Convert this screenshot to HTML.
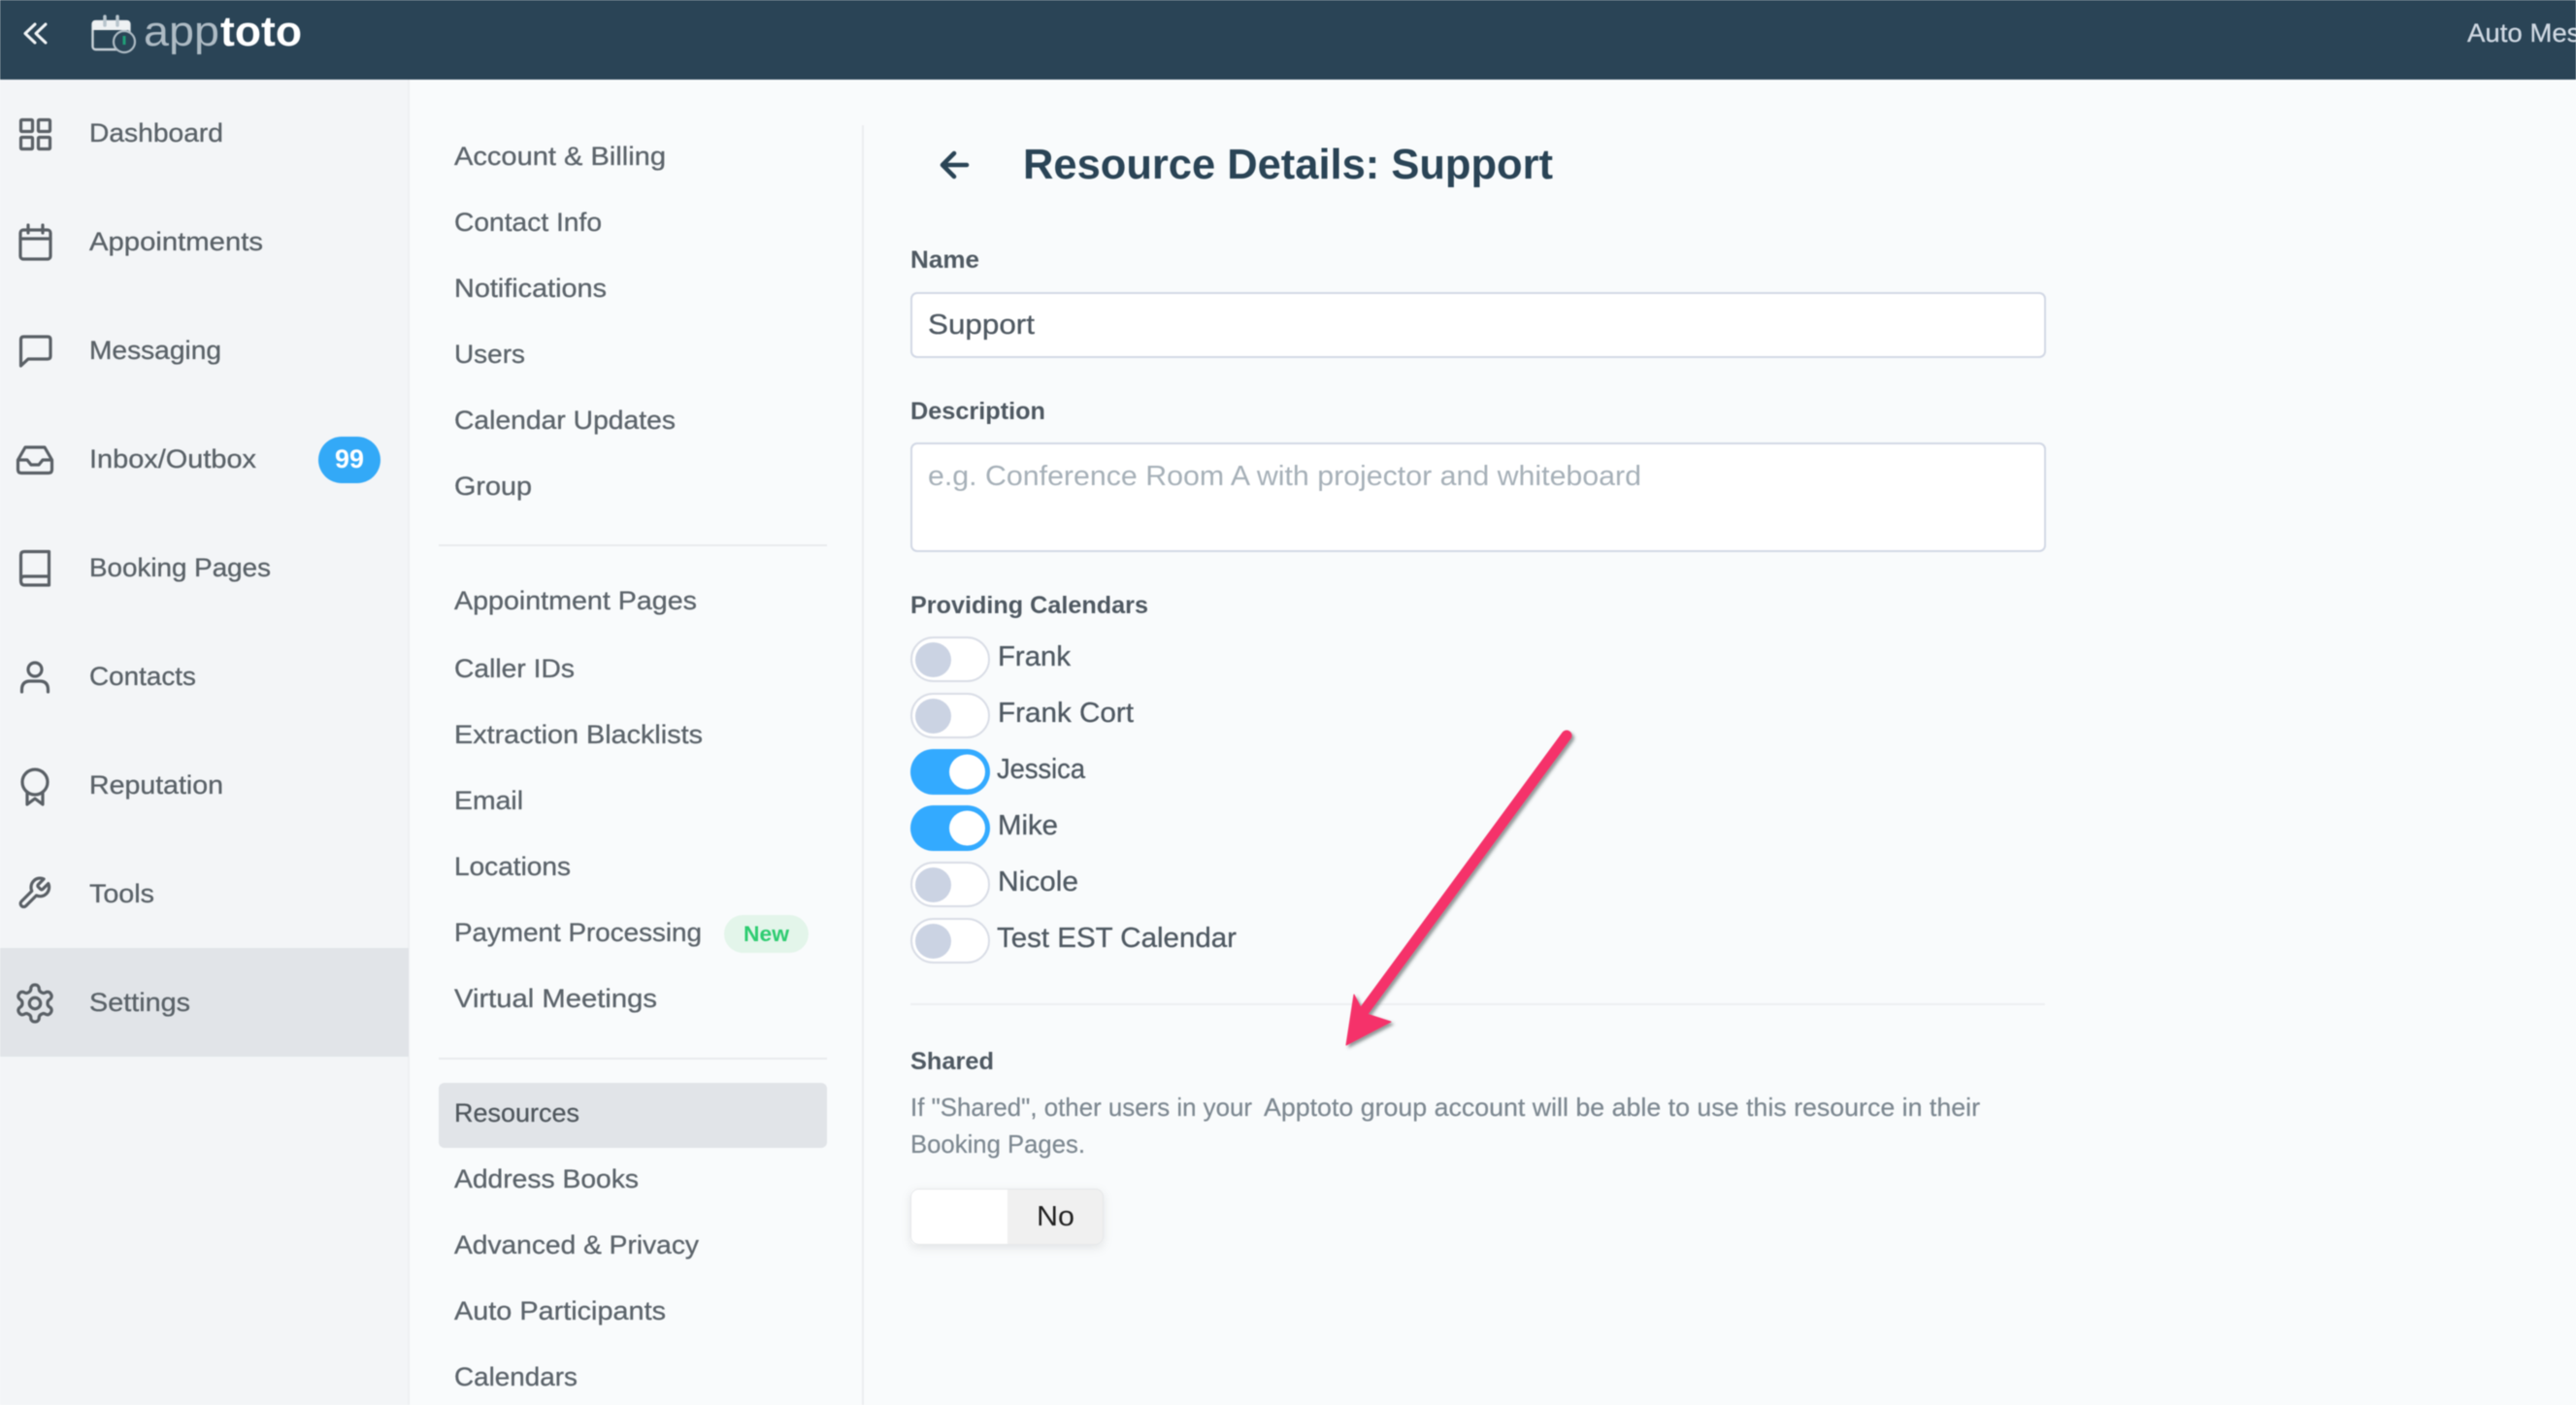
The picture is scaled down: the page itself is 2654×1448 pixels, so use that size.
<!DOCTYPE html>
<html lang="en">
<head>
<meta charset="utf-8">
<title>Resource Details: Support</title>
<style>
html,body{margin:0;padding:0;width:2654px;height:1448px;overflow:hidden;background:#f9fbfc}
svg{display:block;filter:blur(.55px)}
text{font-family:"Liberation Sans",sans-serif;white-space:pre}
.n{font-size:27px;fill:#5a6268;stroke:#5a6268;stroke-width:.3px}
.m{font-size:27px;fill:#5c646b;stroke:#5c646b;stroke-width:.3px}
.l{font-size:25px;font-weight:700;fill:#4f5962}
.t{font-size:29px;fill:#4f5962;stroke:#4f5962;stroke-width:.3px}
.h{font-size:26px;fill:#7d8891;stroke:#7d8891;stroke-width:.2px}
.i{fill:none;stroke:#5a6066;stroke-width:3.2;stroke-linecap:round;stroke-linejoin:round}
</style>
</head>
<body>
<svg xmlns="http://www.w3.org/2000/svg" width="2654" height="1448" viewBox="0 0 2654 1448">
<defs>
<filter id="as" x="-20%" y="-20%" width="140%" height="140%"><feDropShadow dx="2.5" dy="2.5" stdDeviation="1.6" flood-color="#3a4a48" flood-opacity=".55"/></filter>
<filter id="ts" x="-20%" y="-30%" width="140%" height="170%"><feDropShadow dx="0" dy="3" stdDeviation="5" flood-color="#000" flood-opacity=".09"/></filter>
</defs>

<!-- backgrounds -->
<rect width="2654" height="1448" fill="#f9fbfc"/>
<rect x="0" y="82" width="420" height="1366" fill="#f3f5f7"/>
<rect x="420" y="82" width="2" height="1366" fill="#eef0f2"/>
<rect x="0" y="977" width="421" height="112" fill="#e1e4e8"/>
<rect width="2654" height="82" fill="#2a4456"/>
<rect x="888" y="129" width="2" height="1319" fill="#ecedef"/>

<!-- header -->
<path d="M36 25 L26 34.5 L36 44 M47 25 L37 34.5 L47 44" fill="none" stroke="#f2f5f7" stroke-width="3" stroke-linecap="round" stroke-linejoin="round"/>
<rect x="95.5" y="22" width="38" height="29" rx="3" fill="none" stroke="#c9d2d8" stroke-width="2.4"/>
<path d="M95 31 V24 Q95 21 98 21 H131 Q134 21 134 24 V31 Z" fill="#eef1f3"/>
<path d="M108 17 V26 M121 17 V26" stroke="#b8c4cc" stroke-width="3.5" stroke-linecap="round"/>
<circle cx="128" cy="43" r="11" fill="#2a4456" stroke="#aebbc4" stroke-width="2.2"/>
<path d="M128 37 V46" stroke="#1f9e78" stroke-width="3"/>
<text x="148" y="47" font-size="44" fill="#aebbc4" textLength="78" lengthAdjust="spacingAndGlyphs">app</text>
<text x="227" y="47" font-size="44" font-weight="700" fill="#fff" textLength="84" lengthAdjust="spacingAndGlyphs">toto</text>
<text x="2542" y="43" font-size="27" fill="#cfd8e2" stroke="#cfd8e2" stroke-width=".3" textLength="190" lengthAdjust="spacingAndGlyphs">Auto Messages</text>

<!-- sidebar icons -->
<g class="i">
<rect x="21.5" y="123.5" width="12" height="12" rx="1"/><rect x="39.5" y="123.5" width="12" height="12" rx="1"/><rect x="21.5" y="141.5" width="12" height="12" rx="1"/><rect x="39.5" y="141.5" width="12" height="12" rx="1"/>
<rect x="21" y="237" width="31" height="30" rx="3"/><path d="M21 246 H52 M29 232 V240 M44 232 V240"/>
<path d="M21.5 377 V350 Q21.5 347 24.5 347 H49 Q52 347 52 350 V367 Q52 370 49 370 H29 Z"/>
<path d="M18.5 474 L26 461 H46 L53.5 474 V484 Q53.5 487.5 50 487.5 H22 Q18.5 487.5 18.5 484 Z"/><path d="M19 474 H28 L32 479 H40 L44 474 H53"/>
<path d="M21.5 598 V572 Q21.5 568.5 25 568.5 H50.5 V603 H25 Q21.5 603 21.5 598 Q21.5 594 25 594 H50.5"/>
<circle cx="36" cy="690" r="7"/><path d="M22.5 713 V711 Q22.5 702 31 702 H41 Q49.5 702 49.5 711 V713"/>
<circle cx="36" cy="806" r="13"/><path d="M28 817 V829 L36 823 L44 829 V817"/>
<g transform="translate(16.5 902) scale(1.55)" stroke-width="2.05"><path d="M14.7 6.3a1 1 0 0 0 0 1.4l1.6 1.6a1 1 0 0 0 1.4 0l3.77-3.77a6 6 0 0 1-7.94 7.94l-6.91 6.91a2.12 2.12 0 0 1-3-3l6.91-6.91a6 6 0 0 1 7.94-7.94l-3.76 3.76z"/></g>
<g transform="translate(13.2 1011.2) scale(1.9)" stroke-width="1.7"><path d="M12.22 2h-.44a2 2 0 0 0-2 2v.18a2 2 0 0 1-1 1.73l-.43.25a2 2 0 0 1-2 0l-.15-.08a2 2 0 0 0-2.73.73l-.22.38a2 2 0 0 0 .73 2.73l.15.1a2 2 0 0 1 1 1.72v.51a2 2 0 0 1-1 1.74l-.15.09a2 2 0 0 0-.73 2.73l.22.38a2 2 0 0 0 2.73.73l.15-.08a2 2 0 0 1 2 0l.43.25a2 2 0 0 1 1 1.73V20a2 2 0 0 0 2 2h.44a2 2 0 0 0 2-2v-.18a2 2 0 0 1 1-1.73l.43-.25a2 2 0 0 1 2 0l.15.08a2 2 0 0 0 2.73-.73l.22-.39a2 2 0 0 0-.73-2.73l-.15-.08a2 2 0 0 1-1-1.74v-.5a2 2 0 0 1 1-1.74l.15-.09a2 2 0 0 0 .73-2.73l-.22-.38a2 2 0 0 0-2.73-.73l-.15.08a2 2 0 0 1-2 0l-.43-.25a2 2 0 0 1-1-1.73V4a2 2 0 0 0-2-2z"/><circle cx="12" cy="12" r="3"/></g>
</g>

<!-- sidebar labels -->
<g class="n">
<text x="92" y="146" textLength="138" lengthAdjust="spacingAndGlyphs">Dashboard</text>
<text x="92" y="258" textLength="179" lengthAdjust="spacingAndGlyphs">Appointments</text>
<text x="92" y="370" textLength="136" lengthAdjust="spacingAndGlyphs">Messaging</text>
<text x="92" y="482" textLength="172" lengthAdjust="spacingAndGlyphs">Inbox/Outbox</text>
<text x="92" y="594" textLength="187" lengthAdjust="spacingAndGlyphs">Booking Pages</text>
<text x="92" y="706" textLength="110" lengthAdjust="spacingAndGlyphs">Contacts</text>
<text x="92" y="818" textLength="138" lengthAdjust="spacingAndGlyphs">Reputation</text>
<text x="92" y="930" textLength="67" lengthAdjust="spacingAndGlyphs">Tools</text>
<text x="92" y="1042" textLength="104" lengthAdjust="spacingAndGlyphs">Settings</text>
</g>
<rect x="328" y="450" width="64" height="48" rx="24" fill="#33a9f7"/>
<text x="345" y="482" font-size="27" font-weight="700" fill="#fff" textLength="30" lengthAdjust="spacingAndGlyphs">99</text>

<!-- settings nav -->
<rect x="452" y="561" width="400" height="2" fill="#e9ebed"/>
<rect x="452" y="1090" width="400" height="2" fill="#e9ebed"/>
<rect x="452" y="1116" width="400" height="67" rx="6" fill="#e1e4e8"/>
<rect x="746" y="943" width="87" height="39" rx="19.5" fill="#e3f5ea"/>
<text x="766" y="970" font-size="22" font-weight="700" fill="#2ecc71" textLength="47" lengthAdjust="spacingAndGlyphs">New</text>
<g class="m">
<text x="468" y="170" textLength="218" lengthAdjust="spacingAndGlyphs">Account &amp; Billing</text>
<text x="468" y="238" textLength="152" lengthAdjust="spacingAndGlyphs">Contact Info</text>
<text x="468" y="306" textLength="157" lengthAdjust="spacingAndGlyphs">Notifications</text>
<text x="468" y="374" textLength="73" lengthAdjust="spacingAndGlyphs">Users</text>
<text x="468" y="442" textLength="228" lengthAdjust="spacingAndGlyphs">Calendar Updates</text>
<text x="468" y="510" textLength="80" lengthAdjust="spacingAndGlyphs">Group</text>
<text x="468" y="628" textLength="250" lengthAdjust="spacingAndGlyphs">Appointment Pages</text>
<text x="468" y="698" textLength="124" lengthAdjust="spacingAndGlyphs">Caller IDs</text>
<text x="468" y="766" textLength="256" lengthAdjust="spacingAndGlyphs">Extraction Blacklists</text>
<text x="468" y="834" textLength="71" lengthAdjust="spacingAndGlyphs">Email</text>
<text x="468" y="902" textLength="120" lengthAdjust="spacingAndGlyphs">Locations</text>
<text x="468" y="970" textLength="255" lengthAdjust="spacingAndGlyphs">Payment Processing</text>
<text x="468" y="1038" textLength="209" lengthAdjust="spacingAndGlyphs">Virtual Meetings</text>
<text x="468" y="1156" textLength="129" lengthAdjust="spacingAndGlyphs" fill="#4f565c">Resources</text>
<text x="468" y="1224" textLength="190" lengthAdjust="spacingAndGlyphs">Address Books</text>
<text x="468" y="1292" textLength="252" lengthAdjust="spacingAndGlyphs">Advanced &amp; Privacy</text>
<text x="468" y="1360" textLength="218" lengthAdjust="spacingAndGlyphs">Auto Participants</text>
<text x="468" y="1428" textLength="127" lengthAdjust="spacingAndGlyphs">Calendars</text>
</g>

<!-- title -->
<path d="M996 170 H972 M983 158 L971 170 L983 182" fill="none" stroke="#2a4456" stroke-width="4.6" stroke-linecap="round" stroke-linejoin="round"/>
<text x="1054" y="184" font-size="44" font-weight="700" fill="#2a4456" textLength="546" lengthAdjust="spacingAndGlyphs">Resource Details: Support</text>

<!-- form -->
<text class="l" x="938" y="276" textLength="71" lengthAdjust="spacingAndGlyphs">Name</text>
<rect x="939" y="302" width="1168" height="66" rx="6" fill="#fff" stroke="#d2d8e5" stroke-width="2"/>
<text class="t" x="956" y="344" textLength="110" lengthAdjust="spacingAndGlyphs">Support</text>

<text class="l" x="938" y="432" textLength="139" lengthAdjust="spacingAndGlyphs">Description</text>
<rect x="939" y="457" width="1168" height="111" rx="6" fill="#fff" stroke="#d2d8e5" stroke-width="2"/>
<text x="956" y="500" font-size="29" fill="#a6b0b8" textLength="735" lengthAdjust="spacingAndGlyphs">e.g. Conference Room A with projector and whiteboard</text>

<text class="l" x="938" y="632" textLength="245" lengthAdjust="spacingAndGlyphs">Providing Calendars</text>

<!-- toggles -->
<g>
<rect x="939" y="657" width="80" height="45" rx="22.5" fill="#fff" stroke="#d9dde6" stroke-width="2"/><ellipse cx="961.5" cy="680" rx="18.5" ry="18" fill="#cbd3e3"/>
<rect x="939" y="715" width="80" height="45" rx="22.5" fill="#fff" stroke="#d9dde6" stroke-width="2"/><ellipse cx="961.5" cy="738" rx="18.5" ry="18" fill="#cbd3e3"/>
<rect x="938" y="772" width="82" height="47" rx="23.5" fill="#33aaff"/><ellipse cx="996.5" cy="795.5" rx="18.5" ry="18" fill="#fff"/>
<rect x="938" y="830" width="82" height="47" rx="23.5" fill="#33aaff"/><ellipse cx="996.5" cy="853.5" rx="18.5" ry="18" fill="#fff"/>
<rect x="939" y="889" width="80" height="45" rx="22.5" fill="#fff" stroke="#d9dde6" stroke-width="2"/><ellipse cx="961.5" cy="912" rx="18.5" ry="18" fill="#cbd3e3"/>
<rect x="939" y="947" width="80" height="45" rx="22.5" fill="#fff" stroke="#d9dde6" stroke-width="2"/><ellipse cx="961.5" cy="970" rx="18.5" ry="18" fill="#cbd3e3"/>
</g>
<text class="t" x="1028" y="686" textLength="75" lengthAdjust="spacingAndGlyphs">Frank</text>
<text class="t" x="1028" y="744" textLength="140" lengthAdjust="spacingAndGlyphs">Frank Cort</text>
<text class="t" x="1027" y="802" textLength="91" lengthAdjust="spacingAndGlyphs">Jessica</text>
<text class="t" x="1028" y="860" textLength="62" lengthAdjust="spacingAndGlyphs">Mike</text>
<text class="t" x="1028" y="918" textLength="83" lengthAdjust="spacingAndGlyphs">Nicole</text>
<text class="t" x="1027" y="976" textLength="247" lengthAdjust="spacingAndGlyphs">Test EST Calendar</text>

<rect x="938" y="1034" width="1169" height="2" fill="#eef0f2"/>

<text class="l" x="938" y="1102" textLength="86" lengthAdjust="spacingAndGlyphs">Shared</text>
<text class="h" x="938" y="1150" textLength="352" lengthAdjust="spacingAndGlyphs">If "Shared", other users in your</text>
<text class="h" x="1302" y="1150" textLength="738" lengthAdjust="spacingAndGlyphs">Apptoto group account will be able to use this resource in their</text>
<text class="h" x="938" y="1188" textLength="180" lengthAdjust="spacingAndGlyphs">Booking Pages.</text>

<!-- shared switch -->
<rect x="938" y="1225" width="199" height="58" rx="8" fill="#f0f0f0" filter="url(#ts)"/>
<path d="M1038 1225 H946 Q938 1225 938 1233 V1275 Q938 1283 946 1283 H1038 Z" fill="#fff"/>
<rect x="938.5" y="1225.5" width="198" height="57" rx="8" fill="none" stroke="#e6e8ea" stroke-width="1"/>
<text x="1068" y="1263" font-size="29" fill="#222" textLength="39" lengthAdjust="spacingAndGlyphs">No</text>

<!-- arrow -->
<g filter="url(#as)">
<path d="M1614 758 L1403 1045" fill="none" stroke="#f5326b" stroke-width="11" stroke-linecap="round"/>
<path d="M1387 1077 L1395 1025 L1405 1044 L1433 1053 Z" fill="#f5326b" stroke="#f5326b" stroke-width="1" stroke-linejoin="round"/>
</g>
</svg>
</body>
</html>
